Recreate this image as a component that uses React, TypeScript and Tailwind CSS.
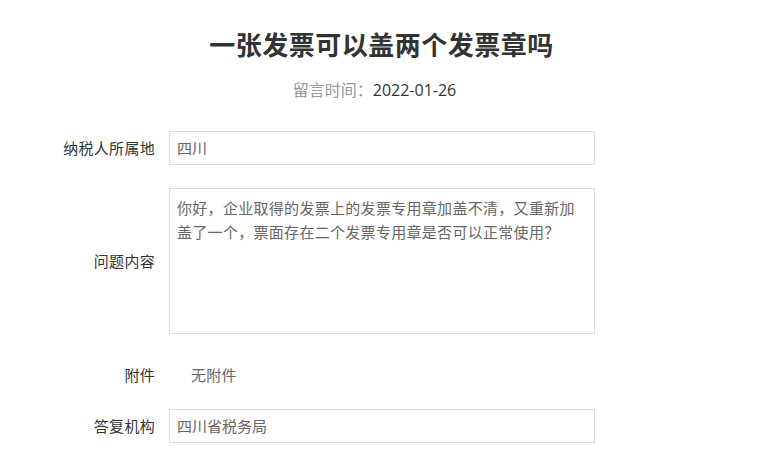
export default function App() {
  return (
    <div className="w-[763px] h-[454px] overflow-hidden bg-white font-['Open_Sans','Noto_Sans_CJK_SC',sans-serif]">
      <h1 className="pt-[27px] text-center text-[26px] leading-[36px] font-bold tracking-[0.5px] text-[#333]">
        一张发票可以盖两个发票章吗
      </h1>
      <p className="mt-[15px] pr-[14px] text-center text-[16px] leading-[24px]">
        <span className="text-[#999]">留言时间：</span>
        <span className="text-[#333]">2022-01-26</span>
      </p>

      <div className="mt-[29px] flex flex-col">
        <div className="flex items-center">
          <div className="w-[155px] text-right text-[15px] tracking-[0.3px] text-[#333]">纳税人所属地</div>
          <div className="ml-[14px] flex h-[34px] w-[426px] items-center border border-[#ddd] px-[7px] text-[15px] text-[#666]">
            四川
          </div>
        </div>

        <div className="mt-[23px] flex items-center">
          <div className="w-[155px] text-right text-[15px] tracking-[0.3px] text-[#333]">问题内容</div>
          <div className="ml-[14px] h-[146px] w-[426px] border border-[#ddd] px-[7px] pt-[7px] text-[15px] leading-[24px] tracking-[0.3px] text-[#666]">
            你好，企业取得的发票上的发票专用章加盖不清，又重新加盖了一个，票面存在二个发票专用章是否可以正常使用？
          </div>
        </div>

        <div className="mt-[24px] flex h-[34px] items-center">
          <div className="w-[155px] text-right text-[15px] tracking-[0.3px] text-[#333]">附件</div>
          <div className="ml-[36px] text-[15px] tracking-[0.3px] text-[#666]">无附件</div>
        </div>

        <div className="mt-[17px] flex items-center">
          <div className="w-[155px] text-right text-[15px] tracking-[0.3px] text-[#333]">答复机构</div>
          <div className="ml-[14px] flex h-[34px] w-[426px] items-center border border-[#ddd] px-[7px] text-[15px] text-[#666]">
            四川省税务局
          </div>
        </div>
      </div>
    </div>
  );
}
